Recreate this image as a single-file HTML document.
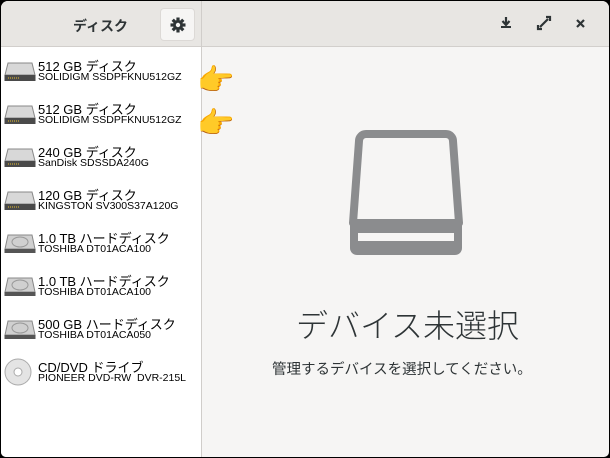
<!DOCTYPE html>
<html><head><meta charset="utf-8"><style>
*{margin:0;padding:0;box-sizing:border-box}
body{width:610px;height:458px;background:#000;overflow:hidden;font-family:"Liberation Sans","Noto Sans CJK JP",sans-serif}
.win{position:absolute;left:1px;top:1px;width:608px;height:456px;background:#f6f5f4;border-radius:7px 7px 5px 5px;overflow:hidden}
.hdr{position:absolute;left:0;top:0;width:608px;height:46px;background:#e8e6e3;border-bottom:1px solid #d2cfcc}
.hdiv{position:absolute;left:200px;top:0;width:1px;height:456px;background:#d0cdca}
.left{position:absolute;left:0;top:46px;width:200px;height:410px;background:#fff}
.t{position:absolute;left:72px;top:15px;font-size:14px;font-weight:bold;color:#2e3436}
.gear{position:absolute;left:159px;top:7px;width:35px;height:33px;border-radius:4px;background:#f6f5f4;border:1px solid #dcd9d6}
.row{position:absolute;left:3px}
.row .n{position:absolute;left:34px;top:-1px;font-size:13px;color:#000;white-space:nowrap}
.row .m{position:absolute;left:34px;top:14px;font-size:10.5px;color:#000;white-space:nowrap}
.row svg{position:absolute;left:0;top:4px}
.hand{position:absolute;font-size:30px;left:196px;font-family:"Noto Color Emoji",sans-serif}
.big{position:absolute;left:295px;top:300px;font-size:32px;font-weight:300;color:#2e3436}
.sub{position:absolute;left:271px;top:357px;font-size:14.5px;color:#2e3436}
</style></head><body><div class="win">
<div class="hdr"></div>
<div class="left"></div>
<div class="hdiv"></div>
<div class="t">ディスク</div>
<div class="gear"><svg width="35" height="33" viewBox="0 0 35 33"><g transform="translate(17,16)" fill="#2e3436"><circle r="5"/><g><rect x="-1.6" y="-7.5" width="3.2" height="15"/><rect x="-1.6" y="-7.5" width="3.2" height="15" transform="rotate(45)"/><rect x="-1.6" y="-7.5" width="3.2" height="15" transform="rotate(90)"/><rect x="-1.6" y="-7.5" width="3.2" height="15" transform="rotate(135)"/></g><circle r="2.2" fill="#f6f5f4"/></g></svg></div>
<svg style="position:absolute;left:497px;top:13px" width="100" height="20" viewBox="0 0 100 20">
<path d="M8 3v7M4.5 7l3.5 4 3.5-4" stroke="#2e3436" stroke-width="2.2" fill="none"/><rect x="3" y="12" width="10" height="2" fill="#2e3436"/>
<path d="M42 13l8-8M44 15h-4v-4M48 3h4v4" stroke="#2e3436" stroke-width="2.2" fill="none"/>
<path d="M79 6l7 7M86 6l-7 7" stroke="#2e3436" stroke-width="2.2"/>
</svg>
<div class="row" style="top:56px"><svg width="32" height="22"><path d="M4 2h24l3 12H1z" fill="#d8d8d8" stroke="#888"/><rect x="0.5" y="14" width="31" height="6" fill="#4a4a4a"/><path d="M4 17h12" stroke="#e8c030" stroke-dasharray="1 1"/></svg><div class="n">512 GB ディスク</div><div class="m">SOLIDIGM SSDPFKNU512GZ</div></div>
<div class="row" style="top:99px"><svg width="32" height="22"><path d="M4 2h24l3 12H1z" fill="#d8d8d8" stroke="#888"/><rect x="0.5" y="14" width="31" height="6" fill="#4a4a4a"/><path d="M4 17h12" stroke="#e8c030" stroke-dasharray="1 1"/></svg><div class="n">512 GB ディスク</div><div class="m">SOLIDIGM SSDPFKNU512GZ</div></div>
<div class="row" style="top:142px"><svg width="32" height="22"><path d="M4 2h24l3 12H1z" fill="#d8d8d8" stroke="#888"/><rect x="0.5" y="14" width="31" height="6" fill="#4a4a4a"/><path d="M4 17h12" stroke="#e8c030" stroke-dasharray="1 1"/></svg><div class="n">240 GB ディスク</div><div class="m">SanDisk SDSSDA240G</div></div>
<div class="row" style="top:185px"><svg width="32" height="22"><path d="M4 2h24l3 12H1z" fill="#d8d8d8" stroke="#888"/><rect x="0.5" y="14" width="31" height="6" fill="#4a4a4a"/><path d="M4 17h12" stroke="#e8c030" stroke-dasharray="1 1"/></svg><div class="n">120 GB ディスク</div><div class="m">KINGSTON SV300S37A120G</div></div>
<div class="row" style="top:228px"><svg width="32" height="22"><path d="M4 2h24l3 14H1z" fill="#d0d0d0" stroke="#888"/><ellipse cx="16" cy="9" rx="8" ry="5" fill="none" stroke="#999"/><rect x="0.5" y="16" width="31" height="4" fill="#555"/></svg><div class="n">1.0 TB ハードディスク</div><div class="m">TOSHIBA DT01ACA100</div></div>
<div class="row" style="top:271px"><svg width="32" height="22"><path d="M4 2h24l3 14H1z" fill="#d0d0d0" stroke="#888"/><ellipse cx="16" cy="9" rx="8" ry="5" fill="none" stroke="#999"/><rect x="0.5" y="16" width="31" height="4" fill="#555"/></svg><div class="n">1.0 TB ハードディスク</div><div class="m">TOSHIBA DT01ACA100</div></div>
<div class="row" style="top:314px"><svg width="32" height="22"><path d="M4 2h24l3 14H1z" fill="#d0d0d0" stroke="#888"/><ellipse cx="16" cy="9" rx="8" ry="5" fill="none" stroke="#999"/><rect x="0.5" y="16" width="31" height="4" fill="#555"/></svg><div class="n">500 GB ハードディスク</div><div class="m">TOSHIBA DT01ACA050</div></div>
<div class="row" style="top:357px"><svg width="32" height="28" style="top:0"><circle cx="14" cy="14" r="13" fill="#e4e4e4" stroke="#aaa"/><circle cx="14" cy="14" r="4" fill="#fff" stroke="#aaa"/></svg><div class="n">CD/DVD ドライブ</div><div class="m">PIONEER DVD-RW&nbsp; DVR-215L</div></div>
<div class="hand" style="top:62px">👉</div>
<div class="hand" style="top:105px">👉</div>
<svg style="position:absolute;left:347px;top:127px" width="116" height="130" viewBox="0 0 116 130">
<path d="M18 6h80a7 7 0 0 1 7 7l6 82H5l6-82a7 7 0 0 1 7-7z" fill="none" stroke="#8b8c8e" stroke-width="8" stroke-linejoin="round"/>
<path d="M2 92h112v28a7 7 0 0 1-7 7H9a7 7 0 0 1-7-7z" fill="#8b8c8e"/>
<rect x="10" y="105" width="96" height="8" fill="#f6f5f4"/>
</svg>
<div class="big">デバイス未選択</div>
<div class="sub">管理するデバイスを選択してください。</div>
</div></body></html>
